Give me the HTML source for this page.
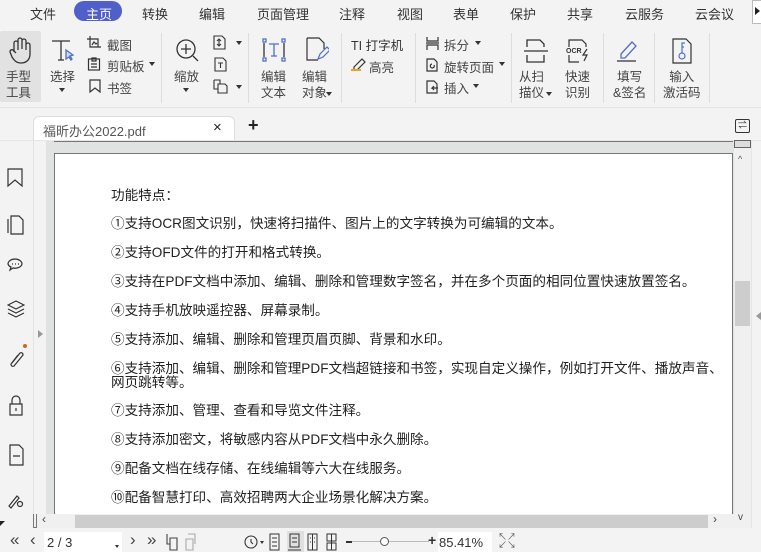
<!DOCTYPE html>
<html><head><meta charset="utf-8"><style>
*{margin:0;padding:0;box-sizing:border-box}
body{width:761px;height:552px;overflow:hidden;background:#f3f3f3;font-family:"Liberation Sans","Noto Sans CJK SC",sans-serif;color:#333;position:relative}
.abs{position:absolute}
.menu span{position:absolute;top:4px;font-size:13px;color:#333}
.lbl{position:absolute;font-size:12.5px;color:#444;line-height:16px;text-align:center}
.sm{position:absolute;font-size:12.5px;color:#444}
.sep{position:absolute;top:33px;width:1px;height:70px;background:#ddd}
.txt{position:absolute;left:111px;font-size:13.6px;color:#222;line-height:14px;white-space:nowrap}
svg{position:absolute}
</style></head><body>
<div class="menu">
<span style="left:30px">文件</span>
<div class="abs" style="left:74px;top:1px;width:48px;height:20px;border-radius:10px;background:#5060c8"></div>
<span style="left:86px;color:#fff">主页</span>
<span style="left:142px">转换</span>
<span style="left:199px">编辑</span>
<span style="left:257px">页面管理</span>
<span style="left:339px">注释</span>
<span style="left:397px">视图</span>
<span style="left:453px">表单</span>
<span style="left:510px">保护</span>
<span style="left:567px">共享</span>
<span style="left:625px">云服务</span>
<span style="left:695px">云会议</span>
</div>
<div class="abs" style="left:752px;top:0;width:9px;height:24px;background:#fff;border:1px solid #bbb;border-right:none"></div>
<div class="abs" style="left:755px;top:7px;border-left:5px solid #222;border-top:4px solid transparent;border-bottom:4px solid transparent"></div>
<div class="abs" style="left:0;top:31px;width:41px;height:71px;background:#e2e2e2;border-radius:2px"></div>
<svg style="left:8px;top:37px" width="26" height="28" viewBox="0 0 26 28" fill="none" stroke="#333" stroke-width="1.3"><path d="M6 15V6a2 2 0 014 0v7M10 12V3a2 2 0 014 0v9M14 12V4a2 2 0 014 0v9M18 13V8a2 2 0 014 0v9c0 6-4 9-9 9s-7-3-9-6L2 15a2 2 0 013-2l3 3"/></svg>
<div class="lbl" style="left:6px;top:69px">手型<br>工具</div>
<svg style="left:50px;top:38px" width="26" height="26" fill="none" stroke="#333" stroke-width="1.3"><path d="M2 3h18M11 3v19M8 22h6"/><path d="M16 12l7 5-3 1 2 3-1 1-2-3-3 2z" fill="#cfd8f5" stroke="#5070c8"/></svg>
<div class="lbl" style="left:50px;top:69px">选择</div>
<div class="abs" style="left:59px;top:88px;border-top:4px solid #333;border-left:3px solid transparent;border-right:3px solid transparent"></div>
<svg style="left:87px;top:36px" width="14" height="14" fill="none" stroke="#333" stroke-width="1.2"><path d="M3 0v11h11M0 3h11v8"/><path d="M5 9l2-3 2 2 1-1" /></svg>
<div class="sm" style="left:107px;top:35px">截图</div>
<svg style="left:87px;top:57px" width="14" height="14" fill="none" stroke="#333" stroke-width="1.2"><rect x="1.5" y="2" width="11" height="11"/><path d="M5 1h4v3H5zM4 7h6M4 10h6"/></svg>
<div class="sm" style="left:107px;top:56px">剪贴板</div>
<div class="abs" style="left:149px;top:62px;border-top:4px solid #333;border-left:3px solid transparent;border-right:3px solid transparent"></div>
<svg style="left:89px;top:79px" width="12" height="14" fill="none" stroke="#333" stroke-width="1.2"><path d="M1 1h10v12l-5-4-5 4z"/></svg>
<div class="sm" style="left:107px;top:78px">书签</div>
<div class="sep" style="left:161px"></div>
<svg style="left:175px;top:38px" width="24" height="25" fill="none" stroke="#333" stroke-width="1.3"><circle cx="11" cy="11" r="9"/><path d="M11 6v10M6 11h10M18 18l5 5"/></svg>
<div class="lbl" style="left:174px;top:69px">缩放</div>
<div class="abs" style="left:183px;top:88px;border-top:4px solid #333;border-left:3px solid transparent;border-right:3px solid transparent"></div>
<svg style="left:213px;top:35px" width="13" height="15" fill="none" stroke="#333" stroke-width="1.1"><path d="M1 1h8l3 3v10H1z"/><path d="M6 4v7M4 6l2-2 2 2M4 9l2 2 2-2"/></svg>
<div class="abs" style="left:236px;top:41px;border-top:4px solid #333;border-left:3px solid transparent;border-right:3px solid transparent"></div>
<svg style="left:214px;top:57px" width="13" height="15" fill="none" stroke="#333" stroke-width="1.1"><path d="M1 1h8l3 3v10H1z"/><path d="M4 6h5M6.5 6v5"/></svg>
<svg style="left:213px;top:79px" width="15" height="15" fill="none" stroke="#333" stroke-width="1.1"><path d="M1 1h6v4M1 1v9h4"/><path d="M5 5h7l2 2v7H5z"/></svg>
<div class="abs" style="left:236px;top:85px;border-top:4px solid #333;border-left:3px solid transparent;border-right:3px solid transparent"></div>
<div class="sep" style="left:248px"></div>
<svg style="left:262px;top:38px" width="24" height="24" fill="none" stroke="#5070c8" stroke-width="1.3"><path d="M2 5v14M22 5v14" stroke="#333"/><rect x="1" y="1" width="3" height="3"/><rect x="20" y="1" width="3" height="3"/><rect x="1" y="20" width="3" height="3"/><rect x="20" y="20" width="3" height="3"/><path d="M7 6h10M12 6v12M9 18h6"/></svg>
<div class="lbl" style="left:261px;top:69px">编辑<br>文本</div>
<svg style="left:305px;top:37px" width="24" height="26" fill="none" stroke="#333" stroke-width="1.2"><path d="M2 1h12l5 5v6M2 1v22h11"/><path d="M13 22l2-5 7-7 3 3-7 7z" stroke="#5070c8"/></svg>
<div class="lbl" style="left:302px;top:69px">编辑<br>对象</div>
<div class="abs" style="left:326px;top:92px;border-top:4px solid #333;border-left:3px solid transparent;border-right:3px solid transparent"></div>
<div class="sep" style="left:341px"></div>
<div class="sm" style="left:351px;top:35px;color:#333">TI 打字机</div>
<svg style="left:351px;top:57px" width="16" height="14" fill="none" stroke="#333" stroke-width="1.2"><path d="M3 10l8-8 3 3-8 8H3z"/><path d="M0 13h10" stroke="#f0a020" stroke-width="2"/></svg>
<div class="sm" style="left:369px;top:57px">高亮</div>
<div class="sep" style="left:415px"></div>
<svg style="left:426px;top:37px" width="13" height="13" fill="none" stroke="#333" stroke-width="1.2"><path d="M1 0v4h11V0M1 13V8h11v5M0 6h13"/></svg>
<div class="sm" style="left:444px;top:35px">拆分</div>
<div class="abs" style="left:475px;top:41px;border-top:4px solid #333;border-left:3px solid transparent;border-right:3px solid transparent"></div>
<svg style="left:426px;top:58px" width="13" height="14" fill="none" stroke="#333" stroke-width="1.2"><path d="M1 1h7l3 3v9H1z"/><path d="M8 7a2 2 0 11-2-1"/></svg>
<div class="sm" style="left:444px;top:57px">旋转页面</div>
<div class="abs" style="left:499px;top:62px;border-top:4px solid #333;border-left:3px solid transparent;border-right:3px solid transparent"></div>
<svg style="left:426px;top:80px" width="13" height="14" fill="none" stroke="#333" stroke-width="1.2"><path d="M1 1h7l3 3v9H1z"/><path d="M12 8H6l2-2M6 8l2 2"/></svg>
<div class="sm" style="left:444px;top:78px">插入</div>
<div class="abs" style="left:473px;top:84px;border-top:4px solid #333;border-left:3px solid transparent;border-right:3px solid transparent"></div>
<div class="sep" style="left:511px"></div>
<svg style="left:524px;top:38px" width="24" height="26" fill="none" stroke="#333" stroke-width="1.3"><path d="M3 9V2h13l4 4v3M3 17v7h17v-7M0 13h24"/></svg>
<div class="lbl" style="left:519px;top:69px">从扫<br>描仪</div>
<div class="abs" style="left:546px;top:92px;border-top:4px solid #333;border-left:3px solid transparent;border-right:3px solid transparent"></div>
<svg style="left:565px;top:38px" width="26" height="26" fill="none" stroke="#333" stroke-width="1.2"><path d="M4 9V2h13l4 4v3M4 17v7h10"/><text x="1" y="15" font-size="7" font-weight="bold" fill="#333" stroke="none" font-family="Liberation Sans">OCR</text><path d="M22 11l-4 6h4l-3 6"/></svg>
<div class="lbl" style="left:565px;top:69px">快速<br>识别</div>
<div class="sep" style="left:603px"></div>
<svg style="left:616px;top:38px" width="24" height="24" fill="none" stroke="#5070c8" stroke-width="1.3"><path d="M5 16L16 4l4 4L9 20H5z"/><path d="M1 23h19" stroke="#333"/></svg>
<div class="lbl" style="left:613px;top:69px">填写<br>&amp;签名</div>
<div class="sep" style="left:654px"></div>
<svg style="left:672px;top:38px" width="20" height="26" fill="none" stroke="#333" stroke-width="1.2"><path d="M1 1h13l5 5v19H1z"/><g stroke="#5070c8"><circle cx="10" cy="18" r="3"/><path d="M10 15V5h3M10 9h2"/></g></svg>
<div class="lbl" style="left:663px;top:69px">输入<br>激活码</div>
<div class="sep" style="left:709px"></div>
<div class="abs" style="left:0;top:107px;width:761px;height:1px;background:#e4e4e4"></div>
<div class="abs" style="left:33px;top:116px;width:202px;height:25px;background:#fff;border:1px solid #ddd;border-bottom:none;border-radius:6px 6px 0 0"></div>
<div class="abs" style="left:43px;top:121px;font-size:13px;color:#555">福昕办公2022.pdf</div>
<div class="abs" style="left:213px;top:119px;font-size:15px;color:#222">×</div>
<div class="abs" style="left:248px;top:115px;font-size:18px;color:#222;font-weight:bold">+</div>
<div class="abs" style="left:735px;top:119px;width:15px;height:14px;border:1px solid #333;border-radius:2px;font-size:9px;line-height:11px;text-align:center">⇌</div>
<div class="abs" style="left:0;top:140px;width:761px;height:1px;background:#e6e6e6"></div>
<div class="abs" style="left:33px;top:141px;width:1px;height:387px;background:#e3e3e3"></div>
<svg style="left:7px;top:168px" width="18" height="360" fill="none" stroke="#333" stroke-width="1.2">
<path d="M1 1h14v17l-7-6-7 6z"/>
<path d="M4 48h8l4 4v14H4zM1 51v14"/>
<path d="M1 96a7 5 0 1114 0 7 5 0 01-9 4l-3 2 1-3a5 5 0 01-3-3z"/><path d="M5 96h1M8 96h1M11 96h1"/>
<path d="M9 133l8 4-8 4-8-4zM1 141l8 4 8-4M1 145l8 4 8-4"/>
<path d="M5 195l8-10a2 2 0 013 2l-9 11a2 2 0 01-3-2l7-9"/>
<path d="M3 236h12v11H3zM5 236v-4a4 4 0 018 0v4M9 240v3"/>
<path d="M3 277h9l4 4v16H3zM6 288h7"/>
<path d="M2 338l8-10 2 2-8 10z"/><circle cx="13" cy="336" r="2.5"/>
</svg>
<div class="abs" style="left:23px;top:344px;width:4px;height:4px;border-radius:2px;background:#e06020"></div>
<div class="abs" style="left:38px;top:330px;border-left:5px solid #999;border-top:4px solid transparent;border-bottom:4px solid transparent"></div>
<div class="abs" style="left:0;top:521px;border-top:5px solid #222;border-right:5px solid transparent"></div>
<div class="abs" style="left:46px;top:141px;width:688px;height:373px;background:#e1e2e2"></div>
<div class="abs" style="left:54px;top:141px;width:679px;height:1px;background:#777"></div>
<div class="abs" style="left:54px;top:153px;width:679px;height:362px;background:#fff;border:1px solid #777;border-bottom:none"></div>
<div class="txt" style="top:189px">功能特点：</div>
<div class="txt" style="top:217px">①支持OCR图文识别，快速将扫描件、图片上的文字转换为可编辑的文本。</div>
<div class="txt" style="top:246px">②支持OFD文件的打开和格式转换。</div>
<div class="txt" style="top:275px">③支持在PDF文档中添加、编辑、删除和管理数字签名，并在多个页面的相同位置快速放置签名。</div>
<div class="txt" style="top:304px">④支持手机放映遥控器、屏幕录制。</div>
<div class="txt" style="top:333px">⑤支持添加、编辑、删除和管理页眉页脚、背景和水印。</div>
<div class="txt" style="top:362px">⑥支持添加、编辑、删除和管理PDF文档超链接和书签，实现自定义操作，例如打开文件、播放声音、<br>网页跳转等。</div>
<div class="txt" style="top:404px">⑦支持添加、管理、查看和导览文件注释。</div>
<div class="txt" style="top:433px">⑧支持添加密文，将敏感内容从PDF文档中永久删除。</div>
<div class="txt" style="top:462px">⑨配备文档在线存储、在线编辑等六大在线服务。</div>
<div class="txt" style="top:491px">⑩配备智慧打印、高效招聘两大企业场景化解决方案。</div>
<div class="abs" style="left:734px;top:141px;width:17px;height:387px;background:#f0f0f0"></div>
<div class="abs" style="left:734px;top:140px;width:17px;height:8px;background:#ddd;border:1px solid #666"></div>
<div class="abs" style="left:738px;top:154px;font-size:9px;color:#555">^</div>
<div class="abs" style="left:735px;top:281px;width:15px;height:45px;background:#cdcdcd"></div>
<div class="abs" style="left:751px;top:141px;width:1px;height:387px;background:#e5e5e5"></div>
<div class="abs" style="left:756px;top:312px;border-right:5px solid #999;border-top:4px solid transparent;border-bottom:4px solid transparent"></div>
<div class="abs" style="left:33px;top:514px;width:701px;height:14px;background:#f0f0f0"></div>
<div class="abs" style="left:33px;top:514px;width:4px;height:14px;border:1px solid #777;border-top:none"></div>
<div class="abs" style="left:75px;top:515px;width:633px;height:13px;background:#cdcdcd"></div>
<div class="abs" style="left:42px;top:512px;font-size:12px;color:#444">‹</div>
<div class="abs" style="left:713px;top:512px;font-size:12px;color:#444">›</div>
<div class="abs" style="left:738px;top:512px;font-size:10px;color:#444">v</div>
<div class="abs" style="left:0;top:528px;width:761px;height:24px;background:#f3f3f3"></div>
<div class="abs" style="left:10px;top:530px;font-size:17px;color:#444">«</div>
<div class="abs" style="left:30px;top:530px;font-size:17px;color:#444">‹</div>
<div class="abs" style="left:44px;top:532px;width:78px;height:20px;background:#fff"></div>
<div class="abs" style="left:47px;top:535px;font-size:13px;color:#333">2 / 3</div>
<div class="abs" style="left:115px;top:545px;border-top:3px solid #333;border-left:2px solid transparent;border-right:2px solid transparent"></div>
<div class="abs" style="left:130px;top:530px;font-size:17px;color:#444">›</div>
<div class="abs" style="left:147px;top:530px;font-size:17px;color:#444">»</div>
<svg style="left:165px;top:533px" width="32" height="18" fill="none" stroke-width="1.1"><path d="M2 1v10h3M5 5h7v12H5z" stroke="#444"/><path d="M23 1h7v10M21 6h7v11h-7z" stroke="#aaa"/></svg>
<svg style="left:244px;top:535px" width="14" height="14" fill="none" stroke="#333" stroke-width="1.1"><circle cx="7" cy="7" r="6"/><path d="M7 4v3l2 2"/></svg>
<div class="abs" style="left:260px;top:541px;border-top:3px solid #333;border-left:2px solid transparent;border-right:2px solid transparent"></div>
<div class="abs" style="left:287px;top:531px;width:17px;height:21px;background:#e0e0e0"></div>
<svg style="left:269px;top:533px" width="72" height="18" fill="none" stroke="#333" stroke-width="1"><path d="M1 1h9v16H1zM3 5h5M3 9h5M3 13h5"/><path d="M21 1h9v13H21zM23 5h5M23 9h5M19 17h13"/><path d="M39 1h9v16h-9zM43.5 1v16M41 5h1M45 5h1M41 9h1M45 9h1"/><path d="M58 1h9v7h-9zM58 10h9v7h-9zM62.5 1v16"/></svg>
<div class="abs" style="left:346px;top:541px;width:6px;height:2px;background:#333"></div>
<div class="abs" style="left:352px;top:541px;width:77px;height:1px;background:#bbb"></div>
<div class="abs" style="left:380px;top:537px;width:9px;height:9px;border-radius:5px;background:#fff;border:1px solid #555"></div>
<div class="abs" style="left:428px;top:532px;font-size:14px;color:#333;font-weight:bold">+</div>
<div class="abs" style="left:438px;top:532px;width:54px;height:20px;background:#fff"></div>
<div class="abs" style="left:439px;top:535px;font-size:13px;color:#333">85.41%</div>
<div class="abs" style="left:498px;top:533px;font-size:9px;color:#555;line-height:8px">↖↗<br>↙↘</div>
</body></html>
